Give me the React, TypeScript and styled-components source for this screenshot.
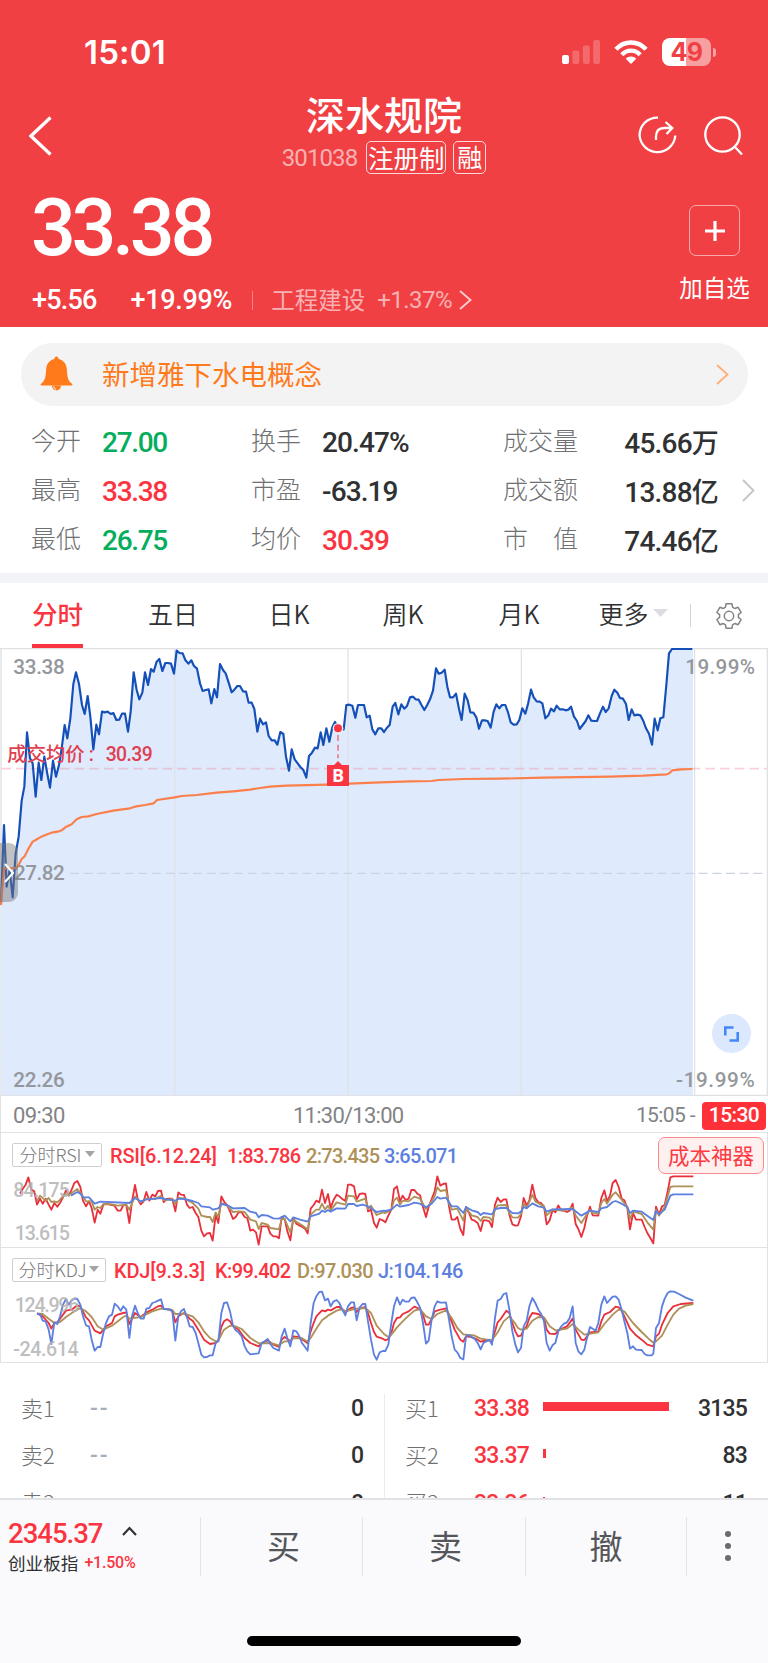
import React from "react";
import styled, { createGlobalStyle } from "styled-components";

const RED = "#fa3541";
const GREEN = "#06ad5c";
const INK = "#303133";

const GlobalStyle = createGlobalStyle`
  * { box-sizing: border-box; }
  body {
    margin: 0;
    background: #fff;
    font-family: Roboto, "Noto Sans CJK SC", sans-serif;
    color: ${INK};
  }
`;

/* ---------- shared ---------- */

const Page = styled.div`
  width: 768px;
  height: 1663px;
  overflow: hidden;
  display: flex;
  flex-direction: column;
`;

const Cjk = styled.span<{ $size: number; $weight?: number; $color?: string }>`
  font-family: "Noto Sans CJK SC", sans-serif;
  font-size: ${(p) => p.$size}px;
  font-weight: ${(p) => p.$weight ?? 400};
  color: ${(p) => p.$color ?? "inherit"};
  line-height: 1;
  white-space: pre;
`;

const Num = styled.span<{ $size: number; $weight?: number; $color?: string; $track?: number }>`
  font-size: ${(p) => p.$size}px;
  font-weight: ${(p) => p.$weight ?? 500};
  color: ${(p) => p.$color ?? "inherit"};
  letter-spacing: ${(p) => p.$track ?? -1.1}px;
  line-height: 1;
  white-space: pre;
`;

/* ---------- header ---------- */

const Header = styled.header`
  height: 327px;
  flex: none;
  background: #f04043;
  color: #fff;
`;

const StatusBar = styled.div`
  height: 96px;
  padding: 3px 52px 0 84px;
  display: flex;
  align-items: center;
  justify-content: space-between;
`;

const Clock = styled.span`
  font-family: Inter, sans-serif;
  font-size: 33px;
  font-weight: 600;
  letter-spacing: 0.2px;
  line-height: 1;
  padding-top: 5px;
`;

const StatusIcons = styled.div`
  display: flex;
  align-items: center;
  gap: 14px;
  padding-top: 5px;
`;

const NavRow = styled.div`
  height: 84px;
  padding: 0 25px 0 29px;
  display: grid;
  grid-template-columns: 105px 1fr 105px;
`;

const NavSide = styled.div<{ $end?: boolean }>`
  padding-top: 20px;
  display: flex;
  align-items: flex-start;
  gap: 27px;
  justify-content: ${(p) => (p.$end ? "flex-end" : "flex-start")};
`;

const TitleBlock = styled.div`
  display: flex;
  flex-direction: column;
  align-items: center;
  padding: 0 4px 0 0;
`;

const TitleText = styled(Cjk)`
  height: 36px;
  line-height: 34px;
`;

const TitleMeta = styled.div`
  display: flex;
  align-items: center;
  margin-top: 9px;
`;

const Tag = styled.span<{ $left: number; $width: number }>`
  width: ${(p) => p.$width}px;
  height: 33px;
  margin-left: ${(p) => p.$left}px;
  padding-bottom: 2px;
  border: 1.5px solid rgba(255, 255, 255, 0.8);
  border-radius: 5px;
  display: flex;
  align-items: center;
  justify-content: center;
`;

const PriceRow = styled.div`
  height: 147px;
  padding: 0 19px 0 31px;
  display: flex;
  justify-content: space-between;
`;

const PriceBlock = styled.div`
  display: flex;
  flex-direction: column;
  padding-top: 9px;
`;

const ChangeLine = styled.div`
  display: flex;
  align-items: center;
  height: 28px;
  margin-top: 18px;
  padding-left: 1px;
`;

const Rule = styled.i<{ $h: number; $color: string }>`
  width: 1px;
  height: ${(p) => p.$h}px;
  background: ${(p) => p.$color};
  flex: none;
`;

const Sector = styled.span`
  display: flex;
  align-items: center;
  gap: 12px;
  margin-left: 18px;
  color: rgba(255, 255, 255, 0.6);
`;

const SectorChange = styled(Num)`
  margin-right: -5px;
`;

const AddBlock = styled.div`
  width: 69px;
  padding-top: 25px;
  display: flex;
  flex-direction: column;
  align-items: center;
  gap: 20px;
`;

const AddButton = styled.div`
  width: 51px;
  height: 51px;
  border: 1.5px solid rgba(255, 255, 255, 0.55);
  border-radius: 7px;
  display: flex;
  align-items: center;
  justify-content: center;
`;

/* ---------- quote summary ---------- */

const Notice = styled.div`
  flex: none;
  height: 63px;
  margin: 16px 20px 0 21px;
  padding: 0 19px 1px;
  border-radius: 32px;
  background: #f3f3f3;
  display: flex;
  align-items: center;
`;

const NoticeText = styled(Cjk)`
  flex: 1;
  margin-left: 29px;
`;

const Stats = styled.section`
  flex: none;
  height: 167px;
  padding: 11px 13px 0 31px;
  display: grid;
  grid-template-columns: 220px 252px 215px 1fr;
`;

const StatColumn = styled.div`
  display: grid;
  grid-template-rows: repeat(3, 49px);
`;

const Stat = styled.div<{ $spread?: boolean }>`
  display: flex;
  align-items: center;
  justify-content: ${(p) => (p.$spread ? "space-between" : "flex-start")};
  gap: 21px;
`;

const StatLabel = styled(Cjk)`
  padding-bottom: 5px;
  min-width: 50px;
`;

const StatValue = styled(Num)`
  padding-top: 2px;
`;

const StatsMore = styled.div`
  height: 147px;
  display: flex;
  align-items: center;
  justify-content: flex-end;
`;

const Band = styled.div`
  flex: none;
  height: 10px;
  background: #f2f3f9;
`;

/* ---------- tabs ---------- */

const Tabs = styled.nav`
  flex: none;
  height: 65px;
  display: grid;
  grid-template-columns: 115px 116px 116px 112px 120px 108px 1fr;
  align-items: stretch;
`;

const Tab = styled.div`
  display: flex;
  align-items: center;
  justify-content: center;
  gap: 4px;
  color: ${INK};
  padding-bottom: 5px;
`;

const ActiveTab = styled(Tab)`
  color: ${RED};
  padding: 0;
`;

const TabUnderline = styled.span`
  display: flex;
  align-items: center;
  height: 65px;
  padding-bottom: 1px;
  border-bottom: 4px solid ${RED};
`;

const GearCell = styled.div`
  display: flex;
  align-items: center;
  gap: 24px;
  padding-left: 3px;
`;

/* ---------- charts ---------- */

const ChartBox = styled.div`
  flex: none;
  position: relative;
  height: 448px;
`;

const Drawing = styled.svg`
  display: block;
`;

const ExpandButton = styled.div`
  position: absolute;
  right: 17px;
  bottom: 43px;
  width: 39px;
  height: 39px;
  border-radius: 50%;
  background: #dbe8fd;
  display: flex;
  align-items: center;
  justify-content: center;
`;

const DrawerHandle = styled.div`
  position: absolute;
  left: 0;
  top: 195px;
  width: 18px;
  height: 59px;
  border-radius: 0 9px 9px 0;
  background: rgba(120, 120, 120, 0.45);
  display: flex;
  align-items: center;
  justify-content: center;
`;

const TimeAxis = styled.div`
  flex: none;
  height: 36px;
  padding: 3px 2px 0 12px;
  border-left: 1px solid #e2e2e4;
  display: grid;
  grid-template-columns: 280px 1fr auto;
  align-items: center;
  color: #828385;
`;

const AxisEnd = styled.div`
  display: flex;
  align-items: center;
  justify-content: flex-end;
  gap: 7px;
`;

const CloseBadge = styled.span`
  width: 64px;
  height: 28px;
  border-radius: 4px;
  background: #ff3138;
  color: #fff;
  display: flex;
  align-items: center;
  justify-content: center;
`;

const Indicator = styled.section`
  flex: none;
  height: 115px;
  position: relative;
  border: solid #e2e2e4;
  border-width: 1px 1px 0;
`;

const IndicatorHead = styled.div`
  position: absolute;
  left: 11px;
  top: 10px;
  height: 24px;
  display: flex;
  align-items: center;
`;

const Picker = styled.span<{ $w: number }>`
  width: ${(p) => p.$w}px;
  height: 24px;
  margin-right: 8px;
  padding-bottom: 2px;
  border: 1px solid #cfcfd1;
  border-radius: 2px;
  display: flex;
  align-items: center;
  justify-content: center;
  gap: 3px;
`;

const Reading = styled(Num)<{ $w: number }>`
  width: ${(p) => p.$w}px;
  padding-top: 2px;
`;

const CostButton = styled.div`
  position: absolute;
  right: 3px;
  top: 4px;
  width: 106px;
  height: 37px;
  padding-bottom: 2px;
  border: 1.5px solid #fb8a8d;
  border-radius: 7px;
  background: #fff0f0;
  display: flex;
  align-items: center;
  justify-content: center;
`;

/* ---------- order book ---------- */

const Book = styled.section`
  flex: none;
  height: 136px;
  padding-top: 22px;
  border-top: 1px solid #e2e2e4;
  overflow: hidden;
  display: grid;
  grid-template-columns: 384px 1px 383px;
`;

const Side = styled.div<{ $buy?: boolean }>`
  padding: ${(p) => (p.$buy ? "0 21px 0 20px" : "0 21px 0 21px")};
`;

const Quote = styled.div`
  height: 47.3px;
  display: grid;
  grid-template-columns: 69px 69px 127px 1fr;
  align-items: center;
`;

const QuoteLabel = styled(Cjk)`
  padding-bottom: 4px;
`;

const QuoteQty = styled(Num)`
  text-align: right;
`;

const DepthBar = styled.div`
  height: 9px;
  margin-bottom: 4px;
  background: ${RED};
`;

/* ---------- bottom bar ---------- */

const BottomBar = styled.footer`
  flex: none;
  height: 165px;
  background: #fafafc;
  border-top: 2px solid #e1e2e5;
  display: flex;
  flex-direction: column;
  justify-content: space-between;
  align-items: center;
  padding-bottom: 17px;
`;

const Actions = styled.div`
  width: 100%;
  height: 59px;
  margin-top: 17px;
  display: grid;
  grid-template-columns: 200px 162px 163px 161px 82px;
`;

const Cell = styled.div<{ $shift?: number }>`
  display: flex;
  align-items: center;
  justify-content: center;
  border-left: 1px solid #e3e4e8;
  padding: 0 0 2px ${(p) => p.$shift ?? 0}px;
`;

const IndexCell = styled.div`
  padding: 3px 0 0 8px;
  display: flex;
  flex-direction: column;
  gap: 6px;
  color: ${RED};
`;

const IndexLine = styled.div<{ $gap: number }>`
  display: flex;
  align-items: center;
  gap: ${(p) => p.$gap}px;
`;

const Caret = styled.svg`
  margin-bottom: 5px;
`;

const IndexName = styled(Cjk)`
  padding-bottom: 2px;
`;

const HomeIndicator = styled.div`
  width: 274px;
  height: 10px;
  border-radius: 5px;
  background: #000;
`;

/* ---------- series ---------- */

type Segment = [number, string];

// A series is kept as chart segments: the x offset of the segment, then its points.
const join = (segments: Segment[]) =>
  segments
    .map(([dx, pts]) =>
      pts
        .trim()
        .split(/\s+/)
        .map((p) => {
          const [x, y] = p.split(",").map(Number);
          return `${x + dx},${y}`;
        })
        .join(" ")
    )
    .join(" ");

const price = join([
  [0, `3,790 12,555 20,740 29,690 38,772 47,640 56,590 65,482 73,440 81,277 90,355 98,370 107,470 116,368 124,420 133,350 142,402 150,443 159,362 168,410 177,375 185,325 194,255 202,295 211,235 220,132 228,97 237,132 246,195 254,222 263,168 271,230 280,328 289,254 297,283 306,215 314,217 323,215 332,222 340,219 349,240 358,239 366,221 375,221 384,275 392,215 401,97 410,150 418,178 427,158 435,97 444,135 453,87 461,95 470,65 478,57 487,93 496,69 504,69 513,71 522,101 530,32 539,39 548,40 556,60 565,71 574,61 582,78 591,86 600,130 608,153 617,150 626,148 634,190 643,147 651,172 660,72 669,90 677,100 686,128 695,157 703,149 712,138 720,138 729,154 738,155 746,188 755,188`],
  [750, `13,207 22,275 30,236 39,253 48,247 56,288 65,301 74,301 82,314 91,276 100,282 108,350 117,392 125,328 134,358 143,370 151,381 160,390 169,413 177,348 186,338 195,323 203,325 212,277 220,315 229,265 238,305 247,262 255,246 264,265 281,268 289,195 298,194 307,197 316,233 324,195 333,195 342,195 350,232 359,227 367,268 376,283 385,265 394,265 402,276 411,263 419,255 428,200 436,189 445,223 454,193 463,206 471,198 480,172 489,170 497,178 506,179 514,194 523,210 532,194 540,178 549,152 558,85 566,101 575,98 584,89 592,140 600,172 609,172 618,161 627,207 635,240 644,161 653,181 661,217 670,218 679,232 687,266 696,241 704,241 713,243 722,263 731,215 739,193 748,205 756,195 766,195`],
  [1500, `24,217 32,247 41,254 50,253 58,240 67,205 76,221 84,192 93,149 101,172 110,184 119,185 127,190 136,235 145,226 153,206 162,214 170,197 179,208 188,208 197,211 205,209 213,200 222,230 231,243 239,267 248,255 257,243 265,226 274,242 283,243 291,243 300,220 309,200 317,216 326,205 335,168 343,149 352,158 360,174 369,176 378,192 386,240 395,208 403,226 412,224 421,226 430,243 438,265 447,281 456,314 464,236 473,271 481,235 490,232 499,135 507,40 516,27 577,27`],
]);

const average = join([
  [0, `3,795 12,685 48,684 56,675 65,657 73,650 85,627 98,605 107,600 124,590 142,583 159,577 177,574 185,571 196,562 215,553 230,538 245,531 265,529 290,522 340,512 390,505 405,500 435,495 461,490 471,480 524,472 545,468 590,465 650,458 700,454 750,449 780,444`],
  [750, `60,440 110,437 230,434 300,431 370,428 480,424 545,423 565,420 640,417`],
  [1500, `0,416 130,413 330,410 430,407 500,403 508,400 517,391 545,388 577,387`],
]);

const rsi6 = join([
  [0, `60,192 68,178 77,165 85,143 94,180 103,185 111,225 120,207 128,222 137,207 146,225 154,240 163,220 172,231 180,220 189,203 198,182 206,198 215,180 223,160 232,154 241,172 249,213 258,230 267,215 275,235 284,279 293,240 301,252 310,225 318,222 327,224 336,226 344,228 353,243 362,243 370,226 379,226 388,280 396,215 405,166 413,208 422,224 431,215 439,187 448,213 457,195 466,200 474,184 483,183 491,217 500,208 509,207 517,207 526,245 535,188 543,195 552,196 561,225 569,235 578,232 587,250 595,262 604,303 612,320 621,311 630,310 638,333 647,255 655,280 664,200 673,217 681,226 690,245 699,268 707,262 716,248 725,248 734,262 742,265 751,303 759,300 768,308 776,345 785,290 794,290 803,290 811,312 820,320 828,320 837,326 845,262 854,268 862,305 871,332 880,265 889,282 897,287 906,291 915,297 923,311 932,237 941,226 949,213 958,218 966,180 975,220 984,193 992,235 1001,210 1010,195 1018,200 1027,208 1036,214 1044,165 1053,165 1062,170 1070,210 1079,193 1088,191 1096,193 1104,245 1113,240 1122,280 1130,294 1139,268 1148,272`],
  [1152, `4,278 13,258 22,240 30,178 39,170 48,215 56,198 65,211 74,207 82,181 91,181 100,192 108,197 117,232 126,262 134,232 143,208 152,185 160,140 169,168 177,163 186,161 195,230 203,270 212,270 220,262 229,298 238,316 246,232 255,250 263,270 272,273 281,280 290,304 298,272 307,272 316,275 324,292 333,225 341,204 350,217 359,209 367,209 376,255 385,284 394,288 402,287 411,260 419,205 428,228 436,212 445,165 454,205 463,218 471,220 480,230 488,284 497,272 506,240 514,248 523,227 532,243 540,243 549,247 557,243 566,222 575,283 583,298 592,322 601,295 609,258 618,231 626,257 643,258 652,205 661,182 669,215 678,198 686,160 695,151 704,172 713,207 721,212 730,235 738,299 747,250 756,270 773,270 782,292 790,310 799,325 808,341 816,231 825,255 834,230 842,226 851,185 859,143 868,140 928,140`],
]);

const rsi12 = join([
  [0, `111,213 120,198 137,213 146,205 154,217 163,215 172,218 180,210 198,190 206,198 215,190 232,178 249,200 258,215 275,215 284,240 293,232 301,235 310,223 336,224 353,228 379,225 388,240 405,200 422,218 439,207 466,208 483,198 491,212 517,208 526,222 535,205 552,206 578,220 595,237 604,258 621,262 630,262 638,277 647,248 655,262 664,220 681,228 699,247 716,245 734,247 751,270 768,275 776,298 785,280 803,285 811,295 837,299 845,268 854,268 871,308 880,270 906,287 923,299 932,255 949,240 958,240 966,222 975,240 984,228 992,242 1010,218 1036,225 1044,198 1062,200 1070,216 1096,207 1104,238 1113,228 1130,256 1148,248`],
  [1152, `4,250 13,245 22,240 30,212 39,204 48,225 56,213 74,215 91,201 108,207 126,238 143,215 152,200 160,173 169,184 186,181 195,222 203,240 220,237 238,273 246,235 263,257 281,262 290,274 298,262 316,264 324,273 333,240 341,227 367,226 376,250 385,263 402,264 411,253 419,220 428,235 445,195 454,215 480,230 488,257 506,240 540,243 566,233 575,258 592,280 609,253 618,240 626,250 643,252 652,220 661,208 669,222 686,195 695,188 713,210 730,232 738,268 747,245 773,253 790,278 808,300 816,240 825,258 842,232 851,200 859,172 868,170 928,170`],
]);

const rsi24 = join([
  [0, `213,198 232,187 241,192 249,203 267,203 284,222 301,216 388,220 405,205 422,215 440,209 483,205 500,209 526,213 535,207 552,208 578,214 595,220 604,230 630,233 638,240 655,236 664,223 681,226 699,236 734,235 751,246 768,250 776,263 785,256 803,258 820,266 837,267 854,258 871,275 880,263 900,270 923,276 932,260 958,252 966,243 975,247 984,241 992,246 1010,236 1036,237 1044,223 1062,223 1070,229 1088,225 1104,230 1130,247 1152,243`],
  [1152, `4,244 22,240 39,225 48,231 74,226 91,219 108,222 126,233 143,222 160,202 169,207 186,204 203,230 220,230 238,250 246,232 263,242 281,247 290,256 298,250 324,254 333,238 350,235 367,235 385,250 402,251 411,246 419,232 428,236 445,221 463,230 480,234 488,246 506,239 566,238 592,258 618,243 643,247 652,236 669,232 686,217 695,214 713,222 730,232 738,250 747,243 773,246 808,271 816,243 825,254 842,240 859,198 868,194 928,194`],
]);

const kdjJ = join([
  [0, `111,553 120,553 128,573 137,575 146,600 154,643 163,578 172,583 180,560 189,525 198,508 206,525 215,512 223,507 232,508 241,525 249,560 258,587 267,590 275,630 284,663 293,652 301,652 310,610 318,580 327,560 336,555 344,522 353,530 362,543 370,530 379,540 388,625 396,560 405,528 413,550 422,567 431,567 439,537 448,535 457,520 466,517 474,513 483,509 491,538 509,539 517,545 526,633 535,560 543,545 552,538 561,563 569,590 578,592 587,610 595,640 604,675 612,683 621,682 630,677 638,677 647,640 655,635 664,550 672,520 681,518 690,545 699,587 707,602 716,608 725,620 734,650 742,665 751,674 776,671 785,640 794,635 803,628 811,643 820,655 837,663 845,620 854,597 862,625 871,650 880,602 889,605 897,618 906,640 915,652 923,663 932,580 941,520 949,500 958,487 966,486 975,512 984,507 992,530 1001,515 1010,511 1018,520 1027,540 1036,557 1044,530 1053,518 1062,518 1070,572 1079,533 1088,523 1096,523 1104,575 1113,630 1122,675 1130,690 1139,668 1148,664`],
  [1152, `4,664 13,645 22,580 30,530 39,503 48,525 56,510 65,516 74,516 82,505 91,503 100,518 108,533 117,580 126,642 134,633 143,570 152,530 160,515 169,519 177,519 186,518 195,570 203,620 212,660 220,668 229,685 238,689 246,620 255,616 263,623 272,627 281,640 290,659 298,640 307,635 316,630 324,645 333,565 341,513 350,508 359,493 367,490 376,540 385,605 394,645 402,668 411,655 419,590 428,573 436,530 445,505 454,520 463,540 471,552 480,575 488,640 497,663 506,646 514,640 523,605 532,590 540,582 549,578 557,565 566,530 575,640 583,665 592,674 601,660 609,625 618,592 626,597 635,603 643,580 652,525 661,500 669,520 678,510 686,501 695,500 704,510 713,540 721,575 730,610 738,657 747,650 756,660 773,661 782,673 790,677 803,677 808,672 816,595 825,580 834,530 842,507 851,490 859,485 870,486 885,493 905,504 928,513`],
]);

const kdjK = join([
  [0, `111,551 128,560 146,580 154,597 163,580 172,578 189,555 198,543 215,540 232,527 241,530 258,563 267,572 284,603 301,611 318,590 336,580 344,560 353,555 370,550 379,548 388,583 405,550 422,562 439,548 457,540 474,530 483,528 491,537 509,540 517,545 526,578 535,560 552,550 569,567 578,573 595,600 612,630 630,643 647,640 655,632 664,592 672,575 681,569 690,575 699,590 716,600 734,625 751,640 776,650 785,640 803,632 820,645 837,652 845,630 854,622 871,635 880,620 897,622 923,641 932,605 941,580 949,560 966,542 975,545 984,540 992,542 1010,532 1018,532 1036,548 1053,535 1062,533 1070,547 1079,537 1096,532 1104,550 1113,580 1122,607 1130,621 1148,627`],
  [1152, `4,632 13,628 22,610 30,580 39,565 48,563 56,553 74,545 91,531 108,538 117,555 126,585 134,585 143,568 152,545 169,540 186,536 195,555 212,600 229,630 238,636 246,620 263,622 281,630 290,636 298,634 316,632 324,636 333,605 341,578 350,568 367,543 376,550 385,580 394,605 402,620 411,618 419,600 428,590 436,565 445,550 463,553 480,565 488,600 497,612 514,613 523,602 549,590 566,567 575,600 592,630 601,631 618,608 643,605 652,575 661,555 678,547 695,531 704,533 713,543 721,560 738,597 756,617 773,630 790,645 808,650 816,620 825,612 834,585 851,550 868,530 890,523 928,520`],
]);

const kdjD = join([
  [0, `111,551 128,553 146,567 163,580 180,577 198,562 223,545 241,535 258,545 275,562 293,590 310,600 336,588 370,562 379,558 388,567 422,562 457,545 483,537 517,541 526,553 552,552 578,560 595,578 612,605 630,625 647,635 655,633 672,600 690,588 707,590 725,598 751,625 776,641 811,640 837,647 854,635 871,635 880,626 905,625 923,636 932,625 949,597 966,572 984,558 1010,543 1027,538 1036,545 1062,538 1096,535 1113,550 1130,588 1152,613`],
  [1152, `13,622 22,615 39,593 56,575 74,558 91,543 108,538 126,560 143,568 160,553 186,542 203,565 220,595 238,614 270,617 290,627 324,632 341,608 359,575 376,560 394,582 402,595 411,600 428,597 445,573 463,562 480,563 497,590 514,602 549,597 566,583 583,600 601,615 643,608 661,583 686,555 704,540 721,545 747,580 773,607 799,632 808,639 816,635 834,618 851,585 868,555 885,537 905,528 928,523`],
]);

/* ---------- small drawings ---------- */

const Icon = styled.svg`
  flex: none;
`;

const Chevron = ({ w, h, color, sw, left }: { w: number; h: number; color: string; sw: number; left?: boolean }) => (
  <Icon width={w} height={h} viewBox={`0 0 ${w} ${h}`} fill="none">
    <path
      d={left ? `M${w - 1.5} 1.5L2 ${h / 2}L${w - 1.5} ${h - 1.5}` : `M1 1L${w - 1.5} ${h / 2}L1 ${h - 1}`}
      stroke={color}
      strokeWidth={sw}
    />
  </Icon>
);

const Signal = () => (
  <svg width="38" height="24" viewBox="0 0 38 24" fill="#fff">
    <rect x="0" y="15" width="7" height="9" rx="2" />
    <g opacity="0.22">
      <rect x="10.4" y="10.5" width="7" height="13.5" rx="2" />
      <rect x="20.8" y="5.5" width="7" height="18.5" rx="2" />
      <rect x="31.2" y="0" width="6.800" height="24" rx="2" />
    </g>
  </svg>
);

const Wifi = () => (
  <svg width="34" height="24" viewBox="0 0 34 24" fill="none" stroke="#fff" strokeWidth="4.4">
    <path d="M2 9.2C10.300 0.200 23.700 0.200 32 9.200" />
    <path d="M7.800 14.700C12.900 9.300 21.100 9.300 26.200 14.700" />
    <path d="M17 24L11.800 18.700C14.600 15.700 19.400 15.700 22.200 18.700Z" fill="#fff" stroke="none" />
  </svg>
);

const BatteryBody = styled.span`
  width: 49px;
  height: 28px;
  border-radius: 8px;
  background: linear-gradient(90deg, #fff 49%, rgba(255, 255, 255, 0.5) 49%);
  color: #f04043;
  font: 700 25px/29px Inter, sans-serif;
  letter-spacing: -0.5px;
  text-align: center;
`;

const BatteryWrap = styled.span`
  display: flex;
  align-items: center;
  gap: 2px;
`;

const BatteryTip = styled.i`
  width: 3px;
  height: 9px;
  border-radius: 0 4px 4px 0;
  background: rgba(255, 255, 255, 0.5);
`;

const Share = () => (
  <svg width="39" height="39" viewBox="0 0 39 39" fill="none" stroke="#fff" strokeWidth="2.3">
    <path d="M20 1.600C9 1.400 1.600 9.600 1.600 19.500A17.900 17.900 0 0 0 37.300 19.500" />
    <path d="M18 24V21C18 14.500 21.500 12 26 12H34" />
    <path d="M27.500 6L34.300 12L28.500 18" />
  </svg>
);

const Search = () => (
  <svg width="39" height="40" viewBox="0 0 39 40" fill="none" stroke="#fff" strokeWidth="2.3">
    <circle cx="18.500" cy="18.500" r="17.200" />
    <path d="M30.500 30.500L38 38.500" />
  </svg>
);

const Bell = () => (
  <svg width="33" height="36" viewBox="0 0 33 36" fill="#ff7a1b">
    <path d="M16.500 0.500a2 2 0 0 1 2 2v.6c5.200 1.200 8 5 8.400 10.300.4 7.600 1 11.200 4.800 14.100 1.300 1 .9 2-.6 2H1.900c-1.500 0-1.900-1-.6-2 3.800-2.900 4.400-6.500 4.800-14.100C6.500 8.100 9.300 4.300 14.500 3.100v-.6a2 2 0 0 1 2-2Z" />
    <path d="M12 29.500h9a4.500 5 0 0 1-9 0Z" />
    <path d="M13.700 30.500c.3 1.500 1 2.300 2.300 2.700" stroke="#fff" strokeWidth="1" fill="none" />
  </svg>
);

const gearPath = (() => {
  const pts: string[] = [];
  for (let i = 0; i < 6; i++) {
    const a = (i * Math.PI) / 3 - Math.PI / 2;
    [
      [-0.38, 9.5],
      [-0.24, 12.6],
      [0.24, 12.6],
      [0.38, 9.5],
    ].forEach(([d, r]) => pts.push(`${14 + r * Math.cos(a + d)} ${14 + r * Math.sin(a + d)}`));
  }
  return `M${pts.join("L")}Z`;
})();

const Gear = () => (
  <svg width="28" height="28" viewBox="0 0 28 28" fill="none" stroke="#818385" strokeWidth="1.500" strokeLinejoin="round">
    <path d={gearPath} />
    <circle cx="14" cy="14" r="4.700" />
  </svg>
);

const Triangle = ({ w, h, color }: { w: number; h: number; color: string }) => (
  <svg width={w} height={h} viewBox="0 0 10 6" preserveAspectRatio="none">
    <path d="M0 0H10L5 6Z" fill={color} />
  </svg>
);

/* ---------- chart views ---------- */

const NUM = "Roboto, sans-serif";

const PriceChart = () => (
  <Drawing width="768" height="448" viewBox="0 24 2304 1344">
    <g fill="none" stroke="#dfe0e2" strokeWidth="4">
      <path d="M0 26H2304M3 24V1368M2302 24V1368M0 1366H2304" />
    </g>
    <path d={`M${price.replace(/ /g, "L")}L2079 27V1366H4Z`} fill="#dfeafd" />
    <g fill="none" stroke="#dfe0e2" strokeWidth="3.500">
      <path d="M524 24V1368M1044 24V1368M1564 24V1368M2084 24V1368" />
    </g>
    <path d="M4 386H2300" stroke="rgba(240,140,160,0.4)" strokeWidth="5" strokeDasharray="29 15" />
    <path d="M210 700H2300" stroke="#ccd3e2" strokeWidth="4" strokeDasharray="27 14" />
    <g fontFamily={NUM} fontSize="62" fontWeight="500" fill="#94979c">
      <text x="40" y="101" textLength="154">33.38</text>
      <text x="2056" y="101" textLength="209">19.99%</text>
      <text x="42" y="720" textLength="152">27.82</text>
      <text x="40" y="1342" textLength="154">22.26</text>
      <text x="2028" y="1342" textLength="236">-19.99%</text>
    </g>
    <polyline points={price} fill="none" stroke="#1450b8" strokeWidth="6.500" strokeLinejoin="round" />
    <polyline points={average} fill="none" stroke="#fb7f4b" strokeWidth="6.500" strokeLinejoin="round" />
    <g fill="#df4050" fontSize="58" fontWeight="500">
      <text x="22" y="363" fontFamily="Noto Sans CJK SC" textLength="232">成交均价</text>
      <text x="266" y="363" fontFamily={NUM}>:</text>
      <text x="317" y="363" fontFamily={NUM} textLength="141">30.39</text>
    </g>
    <path d="M1014 285V355" stroke="#ee7c8a" strokeWidth="5" strokeDasharray="18 11" />
    <circle cx="1014" cy="265" r="16" fill="#e9f0fd" />
    <circle cx="1014" cy="265" r="12" fill={RED} />
    <path d="M1002 375L1014 363L1026 375H1047V438H981V375Z" fill={RED} />
    <text x="1014" y="426" textAnchor="middle" fontFamily="Open Sans" fontWeight="700" fontSize="54" fill="#fff">
      B
    </text>
  </Drawing>
);

const IndicatorChart = ({
  top,
  lines,
  labels,
}: {
  top: number;
  lines: [string, string][];
  labels: [string, number, number, number][];
}) => (
  <Drawing width="766" height="114" viewBox={`3 ${top} 2298 342`}>
    {lines.map(([color, pts]) => (
      <polyline key={color} points={pts} fill="none" stroke={color} strokeWidth="5.500" strokeLinejoin="round" />
    ))}
    <g fontFamily={NUM} fontSize="59" fontWeight="500" fill="rgba(178,178,180,0.85)">
      {labels.map(([text, x, y, len]) => (
        <text key={text} x={x} y={y} textLength={len}>
          {text}
        </text>
      ))}
    </g>
  </Drawing>
);

/* ---------- data ---------- */

type StatItem = { label: string; value: string; unit?: string; color?: string };

const stats: StatItem[][] = [
  [
    { label: "今开", value: "27.00", color: GREEN },
    { label: "最高", value: "33.38", color: RED },
    { label: "最低", value: "26.75", color: GREEN },
  ],
  [
    { label: "换手", value: "20.47%" },
    { label: "市盈", value: "-63.19" },
    { label: "均价", value: "30.39", color: RED },
  ],
  [
    { label: "成交量", value: "45.66", unit: "万" },
    { label: "成交额", value: "13.88", unit: "亿" },
    { label: "市\u3000值", value: "74.46", unit: "亿" },
  ],
];

const statTracks = [-1.3, -0.9, -0.8];

const bids = [
  { price: "33.38", qty: "3135", depth: 126 },
  { price: "33.37", qty: "83", depth: 3 },
  { price: "33.36", qty: "11", depth: 2 },
];

const actions = [
  { name: "买", shift: 4 },
  { name: "卖", shift: 3 },
  { name: "撤", shift: 0 },
];

const TAN = "#ae9158";
const BLUE = "#5c7fe0";
const LINE_RED = "#e9303a";

const DayChange = styled(Num)`
  margin-left: 34px;
`;

const ChangeRule = styled(Rule)`
  margin-left: 20px;
`;

const BookRule = styled(Rule)`
  margin-top: 9px;
`;

export default function App() {
  return (
    <Page>
      <GlobalStyle />
      <Header>
        <StatusBar>
          <Clock>15:01</Clock>
          <StatusIcons>
            <Signal />
            <Wifi />
            <BatteryWrap>
              <BatteryBody>49</BatteryBody>
              <BatteryTip />
            </BatteryWrap>
          </StatusIcons>
        </StatusBar>
        <NavRow>
          <NavSide>
            <Chevron w={23} h={40} color="#fff" sw={3.3} left />
          </NavSide>
          <TitleBlock>
            <TitleText $size={39} $weight={500}>深水规院</TitleText>
            <TitleMeta>
              <Num $size={24} $weight={400} $track={-0.9} $color="rgba(255,255,255,0.6)">301038</Num>
              <Tag $left={9} $width={80}><Cjk $size={25.5}>注册制</Cjk></Tag>
              <Tag $left={7} $width={33}><Cjk $size={25}>融</Cjk></Tag>
            </TitleMeta>
          </TitleBlock>
          <NavSide $end>
            <Share />
            <Search />
          </NavSide>
        </NavRow>
        <PriceRow>
          <PriceBlock>
            <Num $size={79} $track={-4.3}>33.38</Num>
            <ChangeLine>
              <Num $size={27} $track={-0.8}>+5.56</Num>
              <DayChange $size={27} $track={-0.3}>+19.99%</DayChange>
              <ChangeRule $h={19} $color="rgba(255,255,255,0.35)" />
              <Sector>
                <Cjk $size={23.5}>工程建设</Cjk>
                <SectorChange $size={24} $weight={400} $track={-0.5}>+1.37%</SectorChange>
                <Chevron w={13} h={20} color="rgba(255,255,255,0.75)" sw={1.8} />
              </Sector>
            </ChangeLine>
          </PriceBlock>
          <AddBlock>
            <AddButton>
              <svg width="20" height="20" stroke="#fff" strokeWidth="3.200">
                <path d="M10 0V20M0 10H20" />
              </svg>
            </AddButton>
            <Cjk $size={23.5}>加自选</Cjk>
          </AddBlock>
        </PriceRow>
      </Header>

      <Notice>
        <Bell />
        <NoticeText $size={27.5} $color="#ff7a1b">新增雅下水电概念</NoticeText>
        <Chevron w={13} h={21} color="#ffae75" sw={1.8} />
      </Notice>

      <Stats>
        {stats.map((col, i) => (
          <StatColumn key={i}>
            {col.map((s) => (
              <Stat key={s.label} $spread={i === 2}>
                <StatLabel $size={25} $weight={300} $color="#6f7072">{s.label}</StatLabel>
                <StatValue $size={28} $color={s.color ?? INK} $track={statTracks[i]}>
                  {s.value}
                  {s.unit && <Cjk $size={27} $weight={500}>{s.unit}</Cjk>}
                </StatValue>
              </Stat>
            ))}
          </StatColumn>
        ))}
        <StatsMore>
          <Chevron w={13} h={23} color="#c4c5c8" sw={1.8} />
        </StatsMore>
      </Stats>

      <Band />

      <Tabs>
        <ActiveTab>
          <TabUnderline><Cjk $size={25.5} $weight={500}>分时</Cjk></TabUnderline>
        </ActiveTab>
        <Tab><Cjk $size={25} $weight={350}>五日</Cjk></Tab>
        <Tab><Cjk $size={25} $weight={350}>日K</Cjk></Tab>
        <Tab><Cjk $size={25} $weight={350}>周K</Cjk></Tab>
        <Tab><Cjk $size={25} $weight={350}>月K</Cjk></Tab>
        <Tab>
          <Cjk $size={25} $weight={350}>更多</Cjk>
          <Triangle w={15} h={8} color="#dcdde1" />
        </Tab>
        <GearCell>
          <Rule $h={23} $color="#d4d5d8" />
          <Gear />
        </GearCell>
      </Tabs>

      <ChartBox>
        <PriceChart />
        <DrawerHandle>
          <svg width="10" height="20" viewBox="0 0 10 20" fill="none" stroke="#fff" strokeWidth="2">
            <path d="M1 1L9 10L1 19" />
          </svg>
        </DrawerHandle>
        <ExpandButton>
          <svg width="15" height="16" viewBox="0 0 15 16" fill="none" stroke="#4388fb" strokeWidth="2.600">
            <path d="M1.300 9.500V1.500H9.500M13.700 6V14.500H5.500" />
          </svg>
        </ExpandButton>
      </ChartBox>

      <TimeAxis>
        <Num $size={22} $weight={400} $track={-0.6}>09:30</Num>
        <Num $size={22} $weight={400} $track={-0.75}>11:30/13:00</Num>
        <AxisEnd>
          <Num $size={21} $weight={400} $track={-0.6}>15:05 -</Num>
          <CloseBadge><Num $size={21} $track={-0.6}>15:30</Num></CloseBadge>
        </AxisEnd>
      </TimeAxis>

      <Indicator>
        <IndicatorChart
          top={10}
          lines={[[LINE_RED, rsi6], [TAN, rsi12], [BLUE, rsi24]]}
          labels={[["84.175", 40, 202, 170], ["13.615", 44, 332, 166]]}
        />
        <IndicatorHead>
          <Picker $w={90}>
            <Cjk $size={18} $weight={300} $color="#77787a">分时RSI</Cjk>
            <Triangle w={10} h={6} color="#a3a4a6" />
          </Picker>
          <Reading $w={117} $size={20} $color={RED} $track={-0.2}>RSI[6.12.24]</Reading>
          <Reading $w={79} $size={20} $color={RED} $track={-0.7}>1:83.786</Reading>
          <Reading $w={78} $size={20} $color={TAN} $track={-0.7}>2:73.435</Reading>
          <Reading $w={79} $size={20} $color={BLUE} $track={-0.7}>3:65.071</Reading>
        </IndicatorHead>
        <CostButton><Cjk $size={21.5} $color="#fb3a42">成本神器</Cjk></CostButton>
      </Indicator>

      <Indicator>
        <IndicatorChart
          top={355}
          lines={[[LINE_RED, kdjK], [TAN, kdjD], [BLUE, kdjJ]]}
          labels={[["124.996", 44, 547, 194], ["-24.614", 40, 678, 196]]}
        />
        <IndicatorHead>
          <Picker $w={94}>
            <Cjk $size={18} $weight={300} $color="#77787a">分时KDJ</Cjk>
            <Triangle w={10} h={6} color="#a3a4a6" />
          </Picker>
          <Reading $w={101} $size={20} $color={RED} $track={-0.2}>KDJ[9.3.3]</Reading>
          <Reading $w={82} $size={20} $color={RED} $track={-0.6}>K:99.402</Reading>
          <Reading $w={81} $size={20} $color={TAN} $track={-0.6}>D:97.030</Reading>
          <Reading $w={90} $size={20} $color={BLUE} $track={-0.6}>J:104.146</Reading>
        </IndicatorHead>
      </Indicator>

      <Book>
        <Side>
          {[1, 2, 3].map((n) => (
            <Quote key={n}>
              <QuoteLabel $size={22} $weight={300} $color="#6f7072">卖{n}</QuoteLabel>
              <Num $size={23} $color="#a7aebb" $track={2}>--</Num>
              <span />
              <QuoteQty $size={23}>0</QuoteQty>
            </Quote>
          ))}
        </Side>
        <BookRule $h={110} $color="#ebebed" />
        <Side $buy>
          {bids.map((b, i) => (
            <Quote key={b.price}>
              <QuoteLabel $size={22} $weight={300} $color="#6f7072">买{i + 1}</QuoteLabel>
              <Num $size={23} $color={RED} $track={-0.7}>{b.price}</Num>
              <DepthBar style={{ width: b.depth }} />
              <QuoteQty $size={23} $track={-0.8}>{b.qty}</QuoteQty>
            </Quote>
          ))}
        </Side>
      </Book>

      <BottomBar>
        <Actions>
          <IndexCell>
            <IndexLine $gap={20}>
              <Num $size={27.5} $track={-1}>2345.37</Num>
              <Caret width="15" height="10" viewBox="0 0 15 10" fill="none" stroke={INK} strokeWidth="2.200">
                <path d="M1 9L7.500 2L14 9" />
              </Caret>
            </IndexLine>
            <IndexLine $gap={6}>
              <IndexName $size={17.6} $color={INK}>创业板指</IndexName>
              <Num $size={16} $track={-0.2}>+1.50%</Num>
            </IndexLine>
          </IndexCell>
          {actions.map((a) => (
            <Cell key={a.name} $shift={a.shift}>
              <Cjk $size={33} $color="#55565a">{a.name}</Cjk>
            </Cell>
          ))}
          <Cell>
            <svg width="6" height="30" viewBox="0 0 6 30" fill="#6b6c6e">
              <circle cx="3" cy="3" r="3" />
              <circle cx="3" cy="15" r="3" />
              <circle cx="3" cy="27" r="3" />
            </svg>
          </Cell>
        </Actions>
        <HomeIndicator />
      </BottomBar>
    </Page>
  );
}
